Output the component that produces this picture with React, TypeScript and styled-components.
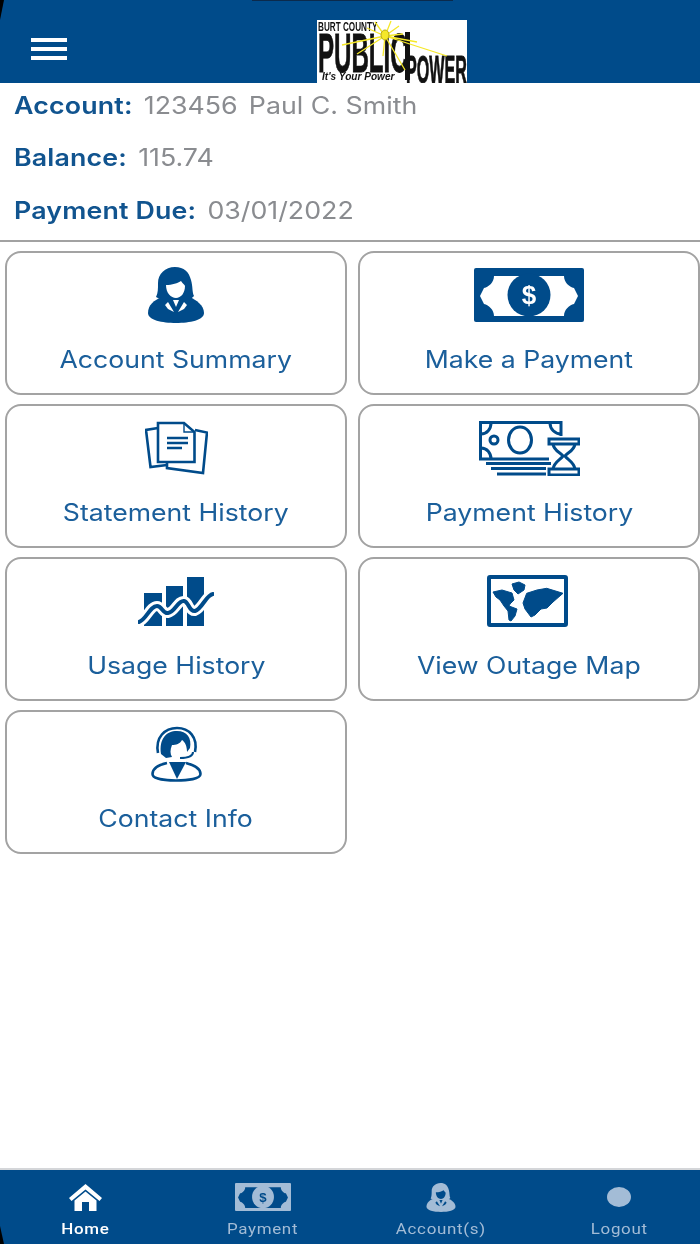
import React from "react";
import styled, { createGlobalStyle } from "styled-components";

const BLUE = "#004b8a";

const GlobalStyle = createGlobalStyle`
  html, body {
    margin: 0;
    padding: 0;
    background: #fff;
  }
`;

const Screen = styled.div`
  position: relative;
  width: 700px;
  height: 1244px;
  display: flex;
  flex-direction: column;
  overflow: hidden;
  background: #fff;
  font-family: Inter, "Liberation Sans", sans-serif;
  filter: blur(0.55px);
`;

const Header = styled.header`
  position: relative;
  height: 83px;
  flex: none;
  display: flex;
  justify-content: center;
  align-items: flex-end;
  background: ${BLUE};
`;

const LogoSlot = styled.div`
  margin-left: 84px;
  height: 63px;
  svg {
    display: block;
  }
`;

const MenuButton = styled.button`
  position: absolute;
  left: 31px;
  top: 38px;
  width: 36px;
  height: 22px;
  padding: 0;
  border: 0;
  display: flex;
  flex-direction: column;
  justify-content: space-between;
  background: none;
`;

const MenuBar = styled.span`
  height: 4px;
  background: #fff;
`;

const Notch = styled.div`
  position: absolute;
  left: 252px;
  top: 0;
  width: 201px;
  height: 1px;
  background: #0b2a4c;
`;

const Corner = styled.div<{ $bottom?: boolean }>`
  position: absolute;
  left: 0;
  width: 4px;
  height: ${(p) => (p.$bottom ? "18px" : "20px")};
  background: #000;
  ${(p) =>
    p.$bottom
      ? "bottom: 0; clip-path: polygon(0 0, 100% 100%, 0 100%);"
      : "top: 0; clip-path: polygon(0 0, 100% 0, 0 100%);"}
`;

const Info = styled.section`
  flex: none;
  display: flex;
  flex-direction: column;
  gap: 8.5px;
  padding: 0 0 8px 14px;
  border-bottom: 2px solid #a2a2a2;
`;

const InfoRow = styled.div`
  height: 44px;
  display: flex;
  align-items: center;
  gap: 10px;
  font-size: 24px;
  white-space: nowrap;
  transform: scaleX(1.115);
  transform-origin: left center;
`;

const InfoLabel = styled.span`
  color: #11548f;
  font-weight: 600;
  letter-spacing: 0.15px;
`;

const InfoValue = styled.span`
  color: #8a8c90;
`;

const Grid = styled.main`
  flex: 1;
  display: grid;
  grid-template-columns: 342px 342px;
  grid-auto-rows: 144px;
  column-gap: 11px;
  row-gap: 9px;
  align-content: start;
  padding: 9px 0 0 5px;
`;

const Card = styled.a`
  display: flex;
  flex-direction: column;
  align-items: center;
  box-sizing: border-box;
  padding-top: 14px;
  border: 2px solid #a3a3a3;
  border-radius: 16px;
  background: #fff;
`;

const CardIcon = styled.div`
  height: 56px;
  display: flex;
  align-items: center;
  justify-content: center;
  color: ${BLUE};
`;

const CardLabel = styled.span`
  margin-top: 23px;
  font-size: 24px;
  line-height: 28px;
  color: #1b5f9b;
  transform: scaleX(1.11);
`;

const TabBar = styled.nav`
  flex: none;
  height: 74px;
  display: grid;
  grid-template-columns: repeat(4, 178px);
  margin-left: -4px;
  width: 712px;
  border-top: 2px solid #d4d6d9;
  box-sizing: content-box;
  background: ${BLUE};
`;

const Tab = styled.a<{ $active?: boolean }>`
  display: flex;
  flex-direction: column;
  align-items: center;
  color: ${(p) => (p.$active ? "#fff" : "#a3bcd6")};
`;

const TabIcon = styled.div`
  height: 30px;
  margin-top: 12px;
  display: flex;
  align-items: center;
  justify-content: center;
`;

const TabLabel = styled.span<{ $active?: boolean }>`
  margin-top: 8px;
  font-family: Roboto, "Liberation Sans", sans-serif;
  font-size: 15px;
  line-height: 18px;
  letter-spacing: 0.6px;
  font-weight: ${(p) => (p.$active ? 500 : 400)};
  transform: scaleX(1.13);
`;

const SmallPerson = styled.div`
  svg {
    display: block;
    width: 30px;
    height: 29px;
  }
`;

type IconProps = { ground?: string };

function Logo() {
  return (
    <svg width="150" height="63" viewBox="0 0 150 63">
      <rect width="150" height="63" fill="#fff" />
      <g fontFamily="Liberation Sans, sans-serif" fontWeight="700" fill="#111">
        <text transform="translate(1 11) scale(0.68 1)" fontSize="12">
          BURT COUNTY
        </text>
        <text transform="translate(1 52) scale(0.43 1)" fontSize="56" stroke="#111" strokeWidth="0.8">
          PUBLIC
        </text>
        <text transform="translate(89 63) scale(0.425 1)" fontSize="38" stroke="#111" strokeWidth="0.8">
          POWER
        </text>
        <text transform="translate(5 60) scale(0.917 1)" fontSize="11" fontStyle="italic">
          It's Your Power
        </text>
      </g>
      <rect x="88" y="12" width="5" height="48" fill="#111" />
      <path
        stroke="#f5e828"
        strokeWidth="1.3"
        d="M68 16L130 36M68 16L25 25M68 16L40 34M68 16L58 2M68 16L74 1M68 16L82 6M68 16L100 22M68 16L88 50M68 16L66 36M68 16L50 8M68 16L86 14"
      />
      <ellipse cx="68" cy="15" rx="4" ry="5" fill="#f5e828" stroke="#b5a91a" />
    </svg>
  );
}

function PersonIcon({ ground = "#fff" }: IconProps) {
  return (
    <svg width="56" height="56" viewBox="0 0 56 56">
      <path
        fill="currentColor"
        d="M27 0C17 0 10 7 10 16C10 22 10 26 8 30C13 33 20 34 28 34C36 34 43 33 46 29C44 25 45 20 43 13C41 5 36 0 27 0Z"
      />
      <path
        fill="currentColor"
        d="M14 30C6 33 0 38 0 46C0 53 14 56 28 56C42 56 56 53 56 46C56 38 48 33 42 30Z"
      />
      <path fill={ground} d="M18 18C24 18 30 16 33 14C35 17 37 18 37 19C37 26 33 31 28 31C23 31 18 26 18 18Z" />
      <path fill={ground} d="M20 35L26 45L20 42L17 38ZM36 35L30 45L36 42L39 38ZM25 33H31L28 40Z" />
    </svg>
  );
}

function MoneyIcon({ ground = "#fff", width = 110, height = 54 }: IconProps & { width?: number; height?: number }) {
  return (
    <svg width={width} height={height} viewBox="0 0 110 54" preserveAspectRatio="none">
      <rect width="110" height="54" rx="2" fill="currentColor" />
      <path
        fill={ground}
        d="M20 8H90C90 14 95 19 100 20L104 28L100 36C95 37 90 42 90 48H20C20 42 15 37 10 36L6 28L10 20C15 19 20 14 20 8Z"
      />
      <circle cx="55" cy="27" r="21.5" fill="currentColor" />
      <text
        x="55"
        y="36"
        textAnchor="middle"
        fontFamily="Liberation Sans, sans-serif"
        fontWeight="700"
        fontSize="26"
        fill={ground}
      >
        $
      </text>
    </svg>
  );
}

function DocsIcon() {
  return (
    <svg width="63" height="54" viewBox="0 0 63 54" fill="none" stroke="currentColor" strokeWidth="2.6">
      <path d="M13 2H39L49.5 11V41H13Z" />
      <path d="M39 2V11H49.5" strokeWidth="1.4" />
      <path d="M13 7L1 9L5.5 46L22 44" />
      <path d="M50 9L62 11.5L58 52L22 47V42" />
      <path d="M22 17H43M22 22H43M22 27H37" />
    </svg>
  );
}

function BillHistoryIcon() {
  return (
    <svg width="101" height="55" viewBox="0 0 101 55" fill="none" stroke="currentColor" strokeWidth="3">
      <path d="M82 15V1.5H1.5V38H70" />
      <path d="M2 13C8 13 12 8 12 2M71 2C71 8 76 13 82 13M2 27C8 27 12 32 12 38" />
      <ellipse cx="41" cy="19" rx="11.5" ry="13" />
      <circle cx="15" cy="19" r="4" />
      <path d="M7 42.5H72M12 47.5H67M18 53H67" />
      <path d="M70 18H100V23H70ZM70 48H100V54H70Z" />
      <path d="M74 23C75 30 81 31 84 35C81 39 75 41 74 48M96 23C95 30 89 31 86 35C89 39 95 41 96 48" />
    </svg>
  );
}

function UsageIcon() {
  const wave = "M1 46C8 44 12 30 19 30C24 30 25 38 30 37C37 36 40 24 46 25C51 26 51 36 57 35C64 33 68 19 75 18";
  return (
    <svg width="76" height="51" viewBox="0 0 76 51">
      <g fill="currentColor">
        <rect x="6" y="17" width="18" height="33" />
        <rect x="28" y="10" width="17" height="40" />
        <rect x="49" y="1" width="17" height="49" />
      </g>
      <path fill="none" stroke="#fff" strokeWidth="10" d={wave} />
      <path fill="none" stroke="currentColor" strokeWidth="4" strokeLinecap="round" d={wave} />
    </svg>
  );
}

function MapIcon() {
  return (
    <svg width="84" height="52" viewBox="0 0 84 52">
      <rect x="2" y="2" width="77" height="48" rx="1" fill="none" stroke="currentColor" strokeWidth="4" />
      <g fill="currentColor" stroke="currentColor" strokeWidth="1" strokeLinejoin="round">
        <path d="M6 17L15 15L25 18L27 25L23 29L22 31L30 34L28 41L24 46L22 45L21 36L17 31L13 25L9 22Z" />
        <path d="M25 9L32 7L38 10L37 15L31 19L27 15Z" />
        <path d="M39.7 18.3L50 15L59.7 13.3L76 18.3L66 27L60 33L54 34L48 40L44 42L38 34L36 28Z" />
      </g>
    </svg>
  );
}

function HeadsetIcon() {
  return (
    <svg width="51" height="56" viewBox="0 0 51 56" fill="none" stroke="currentColor" strokeWidth="2.6">
      <path d="M7 27C4 11 14 2 26 2C38 2 47 11 44 26" />
      <path
        fill="currentColor"
        stroke="none"
        d="M10 28C8 13 15 5 26 5C36 5 41 12 39 22L36 26C36 20 34 16 31 14C29 18 25 19 21 19C19 24 19 28 21 31L15 32Z"
      />
      <path d="M42 26C42 31 36 32 29 32" strokeWidth="2" />
      <path d="M16 37C7 39 1.5 42 1.5 48C1.5 53 14 54.5 25 54.5C37 54.5 49.5 53 49.5 48C49.5 42 43 39 35 37" />
      <path fill="currentColor" stroke="none" d="M18 36H35L26 53Z" />
    </svg>
  );
}

function HomeIcon() {
  return (
    <svg width="33" height="27" viewBox="0 0 33 27" fill="currentColor">
      <path d="M16.5 0L33 14L30.5 17L16.5 5.5L2.5 17L0 14Z" />
      <path d="M5.5 16.5L16.5 7.5L27.5 16.5V27H20V18H13V27H5.5Z" />
    </svg>
  );
}

function DotIcon() {
  return (
    <svg width="24" height="20" viewBox="0 0 24 20" fill="currentColor">
      <ellipse cx="12" cy="10" rx="12" ry="10" />
    </svg>
  );
}

const tiles = [
  { label: "Account Summary", icon: <PersonIcon /> },
  { label: "Make a Payment", icon: <MoneyIcon /> },
  { label: "Statement History", icon: <DocsIcon /> },
  { label: "Payment History", icon: <BillHistoryIcon /> },
  { label: "Usage History", icon: <UsageIcon /> },
  { label: "View Outage Map", icon: <MapIcon /> },
  { label: "Contact Info", icon: <HeadsetIcon /> },
];

const tabs = [
  { label: "Home", icon: <HomeIcon />, active: true },
  { label: "Payment", icon: <MoneyIcon ground={BLUE} width={56} height={28} /> },
  {
    label: "Account(s)",
    icon: (
      <SmallPerson>
        <PersonIcon ground={BLUE} />
      </SmallPerson>
    ),
  },
  { label: "Logout", icon: <DotIcon /> },
];

export default function App() {
  return (
    <>
      <GlobalStyle />
      <Screen>
        <Header>
          <MenuButton aria-label="Menu">
            <MenuBar />
            <MenuBar />
            <MenuBar />
          </MenuButton>
          <LogoSlot>
            <Logo />
          </LogoSlot>
          <Notch />
        </Header>

        <Info>
          <InfoRow>
            <InfoLabel>Account:</InfoLabel>
            <InfoValue>123456</InfoValue>
            <InfoValue>Paul C. Smith</InfoValue>
          </InfoRow>
          <InfoRow>
            <InfoLabel>Balance:</InfoLabel>
            <InfoValue>115.74</InfoValue>
          </InfoRow>
          <InfoRow>
            <InfoLabel>Payment Due:</InfoLabel>
            <InfoValue>03/01/2022</InfoValue>
          </InfoRow>
        </Info>

        <Grid>
          {tiles.map((tile) => (
            <Card key={tile.label}>
              <CardIcon>{tile.icon}</CardIcon>
              <CardLabel>{tile.label}</CardLabel>
            </Card>
          ))}
        </Grid>

        <TabBar>
          {tabs.map((tab) => (
            <Tab key={tab.label} $active={tab.active}>
              <TabIcon>{tab.icon}</TabIcon>
              <TabLabel $active={tab.active}>{tab.label}</TabLabel>
            </Tab>
          ))}
        </TabBar>

        <Corner />
        <Corner $bottom />
      </Screen>
    </>
  );
}
